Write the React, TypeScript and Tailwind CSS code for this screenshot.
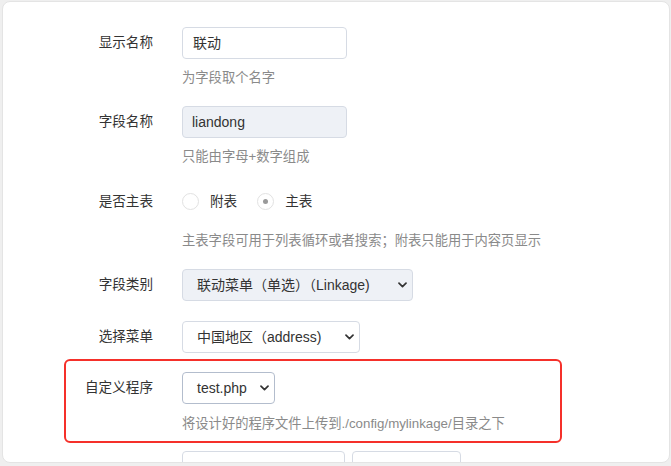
import React from 'react';

const font = { fontFamily: '"Liberation Sans", "Noto Sans CJK SC", sans-serif' };

const Chevron: React.FC = () => (
  <svg width="9" height="6" viewBox="0 0 9 6" className="absolute right-[5px] top-1/2 -translate-y-1/2">
    <path d="M1 1.2 L4.5 4.6 L8 1.2" fill="none" stroke="#333" strokeWidth="1.7" strokeLinecap="round" strokeLinejoin="round" />
  </svg>
);

const Row: React.FC<{ label: string; help?: string; helpGap?: string; className?: string; children: React.ReactNode }> = ({ label, help, helpGap = 'mt-[9px]', className = '', children }) => (
  <div className={`flex ${className}`}>
    <div className="w-[150px] shrink-0 h-[32px] flex items-center justify-end text-[13.6px] text-[#333]">{label}</div>
    <div className="ml-[29px] flex flex-col">
      {children}
      {help && <div className={`${helpGap} text-[13.3px] leading-[20px] text-[#8a8a8a]`}>{help}</div>}
    </div>
  </div>
);

const Select: React.FC<{ value: string; width: string; disabled?: boolean; strong?: boolean }> = ({ value, width, disabled, strong }) => (
  <div
    className={`relative ${width} h-[32px] rounded-[4px] border ${strong ? 'border-[#b3bdcd]' : 'border-[#d6dbe4]'} ${disabled ? 'bg-[#eef1f6]' : 'bg-white'} flex items-center pl-[14px] text-[14px] text-[#333]`}
  >
    {value}
    <Chevron />
  </div>
);

const Radio: React.FC<{ checked?: boolean; label: string }> = ({ checked, label }) => (
  <div className="flex items-center">
    <span className="w-[17px] h-[17px] rounded-full border border-[#e2e2e2] bg-white flex items-center justify-center">
      {checked && <span className="w-[5px] h-[5px] rounded-full bg-[#9a9a9a]" />}
    </span>
    <span className="ml-[11px] text-[13.6px] text-[#333]">{label}</span>
  </div>
);

export default function App() {
  return (
    <div className="w-[671px] h-[466px] bg-[#efefef] pt-[1px] pl-[2px] pr-[1px] pb-[3px]" style={font}>
      <div className="h-full bg-white rounded-[8px] border border-[#e4e4e4] overflow-hidden pt-[25px]">
        <Row label="显示名称" help="为字段取个名字">
          <div className="w-[165px] h-[32px] rounded-[4px] border border-[#d6dbe4] bg-white flex items-center pl-[10px] text-[14px] text-[#333]">联动</div>
        </Row>
        <Row label="字段名称" help="只能由字母+数字组成" className="mt-[18px]">
          <div className="w-[165px] h-[32px] rounded-[4px] border border-[#d6dbe4] bg-[#eef1f6] flex items-center pl-[9px] text-[14px] text-[#333]">liandong</div>
        </Row>
        <Row label="是否主表" help="主表字段可用于列表循环或者搜索；附表只能用于内容页显示" helpGap="mt-[13px]" className="mt-[19px]">
          <div className="h-[32px] flex items-center gap-[20px]">
            <Radio label="附表" />
            <Radio label="主表" checked />
          </div>
        </Row>
        <Row label="字段类别" className="mt-[18px]">
          <Select value="联动菜单（单选）（Linkage)" width="w-[231px]" disabled />
        </Row>
        <Row label="选择菜单" className="mt-[20px]">
          <Select value="中国地区（address)" width="w-[178px]" />
        </Row>
        <div className="relative mt-[19px]">
          <Row label="自定义程序" help="将设计好的程序文件上传到./config/mylinkage/目录之下" helpGap="mt-[10px]">
            <Select value="test.php" width="w-[93px]" strong />
          </Row>
          <span className="absolute -top-[13px] -bottom-[9px] left-[61px] w-[498px] border-2 border-[#f5302a] rounded-[6px] pointer-events-none" />
        </div>
        <div className="flex mt-[17px]">
          <div className="w-[150px] shrink-0" />
          <div className="ml-[29px] flex gap-[7px]">
            <div className="w-[163px] h-[32px] rounded-[4px] border border-[#d6dbe4] bg-white" />
            <div className="w-[109px] h-[32px] rounded-[4px] border border-[#d6dbe4] bg-white" />
          </div>
        </div>
      </div>
    </div>
  );
}
